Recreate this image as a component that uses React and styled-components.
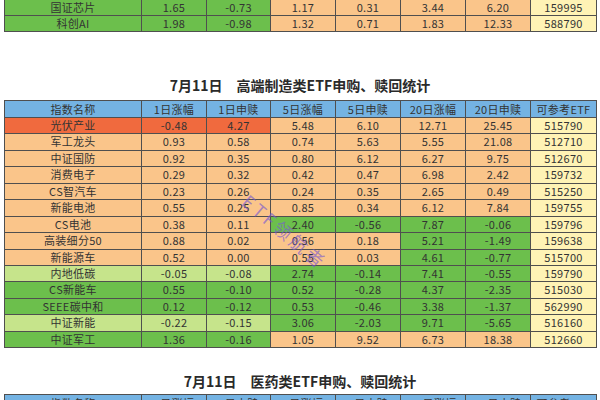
import React from "react";
import styled, { createGlobalStyle } from "styled-components";

const GlobalStyle = createGlobalStyle`
  html, body {
    margin: 0;
    padding: 0;
    background: #fff;
  }
  body {
    font-family: "Noto Sans CJK SC", "Noto Sans", sans-serif;
  }
`;

const fills = {
  b: "#74b3e3",
  r: "#f06a3e",
  o: "#fac58a",
  g: "#6cbf4c",
  l: "#c6e48b",
  y: "#fff3b5",
};

const Page = styled.div`
  position: relative;
  width: 600px;
  height: 400px;
  overflow: hidden;
  padding: 0 4px;
  box-sizing: border-box;
`;

const Table = styled.table`
  width: 592px;
  border-collapse: collapse;
  table-layout: fixed;
  margin-top: ${(p) => p.$offset || 0}px;
`;

const Cell = styled.td`
  background: ${(p) => fills[p.$fill]};
  border: 1px solid #4f4f4f;
  padding: 0;
  text-align: center;
  font-size: 11px;
  line-height: ${(p) => p.$h}px;
  color: #333;
  white-space: nowrap;
  letter-spacing: 0.3px;
`;

const Title = styled.h2`
  margin: 0;
  padding: ${(p) => p.$pt}px 0 ${(p) => p.$pb}px;
  text-align: center;
  font-size: 14px;
  line-height: 16px;
  font-weight: 700;
  color: #2a2a2a;
`;

const DateTag = styled.span`
  margin-right: 14px;
`;

const Watermark = styled.div`
  position: absolute;
  left: 254px;
  top: 188px;
  transform: rotate(40deg);
  transform-origin: left top;
  font-size: 18px;
  color: rgba(120, 90, 210, 0.65);
  white-space: nowrap;
  letter-spacing: 3px;
  pointer-events: none;
`;

const widths = [137, 65, 64, 65, 65, 65, 65, 66];
const headers = ["指数名称", "1日涨幅", "1日申赎", "5日涨幅", "5日申赎", "20日涨幅", "20日申赎", "可参考ETF"];

// each row: cells in order, plus one fill letter per column
const topRows = [
  { c: ["国证芯片", "1.65", "-0.73", "1.17", "0.31", "3.44", "6.20", "159995"], f: "gggooooy" },
  { c: ["科创AI", "1.98", "-0.98", "1.32", "0.71", "1.83", "12.33", "588790"], f: "gggooooy" },
];

const mainRows = [
  { c: ["光伏产业", "-0.48", "4.27", "5.48", "6.10", "12.71", "25.45", "515790"], f: "rrrooooy" },
  { c: ["军工龙头", "0.93", "0.58", "0.74", "5.63", "5.55", "21.08", "512710"], f: "oooooooy" },
  { c: ["中证国防", "0.92", "0.35", "0.80", "6.12", "6.27", "9.75", "512670"], f: "oooooooy" },
  { c: ["消费电子", "0.29", "0.32", "0.42", "0.47", "6.98", "2.42", "159732"], f: "oooooooy" },
  { c: ["CS智汽车", "0.23", "0.26", "0.24", "0.35", "2.65", "0.49", "515250"], f: "oooooooy" },
  { c: ["新能电池", "0.55", "0.25", "0.85", "0.34", "6.12", "7.84", "159755"], f: "oooooooy" },
  { c: ["CS电池", "0.38", "0.11", "2.40", "-0.56", "7.87", "-0.06", "159796"], f: "oooggggy" },
  { c: ["高装细分50", "0.88", "0.02", "0.56", "0.18", "5.21", "-1.49", "159638"], f: "oooooggy" },
  { c: ["新能源车", "0.52", "0.00", "0.55", "0.03", "4.61", "-0.77", "515700"], f: "oooooggy" },
  { c: ["内地低碳", "-0.05", "-0.08", "2.74", "-0.14", "7.41", "-0.55", "159790"], f: "lllggggy" },
  { c: ["CS新能车", "0.55", "-0.10", "0.52", "-0.28", "4.37", "-2.35", "515030"], f: "gggggggy" },
  { c: ["SEEE碳中和", "0.12", "-0.12", "0.53", "-0.46", "3.38", "-1.37", "562990"], f: "gggggggy" },
  { c: ["中证新能", "-0.22", "-0.15", "3.06", "-2.03", "9.71", "-5.65", "516160"], f: "lllggggy" },
  { c: ["中证军工", "1.36", "-0.16", "1.05", "9.52", "6.73", "18.38", "512660"], f: "gggooooy" },
];

const Cols = () => (
  <colgroup>
    {widths.map((w, i) => (
      <col key={i} style={{ width: w }} />
    ))}
  </colgroup>
);

const HeaderRow = () => (
  <tr>
    {headers.map((h) => (
      <Cell key={h} $fill="b" $h={16}>
        {h}
      </Cell>
    ))}
  </tr>
);

const DataRows = ({ rows, h }) =>
  rows.map((r) => (
    <tr key={r.c[0]}>
      {r.c.map((v, i) => (
        <Cell key={i} $fill={r.f[i]} $h={h}>
          {v}
        </Cell>
      ))}
    </tr>
  ));

const App = () => (
  <>
    <GlobalStyle />
    <Page>
      <Table $offset={-1}>
        <Cols />
        <tbody>
          <DataRows rows={topRows} h={15} />
        </tbody>
      </Table>

      <Title $pt={45} $pb={7}>
        <DateTag>7月11日</DateTag>高端制造类ETF申购、赎回统计
      </Title>

      <Table>
        <Cols />
        <tbody>
          <HeaderRow />
          <DataRows rows={mainRows} h={15.43} />
        </tbody>
      </Table>

      <Title $pt={25} $pb={5}>
        <DateTag>7月11日</DateTag>医药类ETF申购、赎回统计
      </Title>

      <Table>
        <Cols />
        <tbody>
          <HeaderRow />
        </tbody>
      </Table>

      <Watermark>ETF领航者</Watermark>
    </Page>
  </>
);

export default App;
